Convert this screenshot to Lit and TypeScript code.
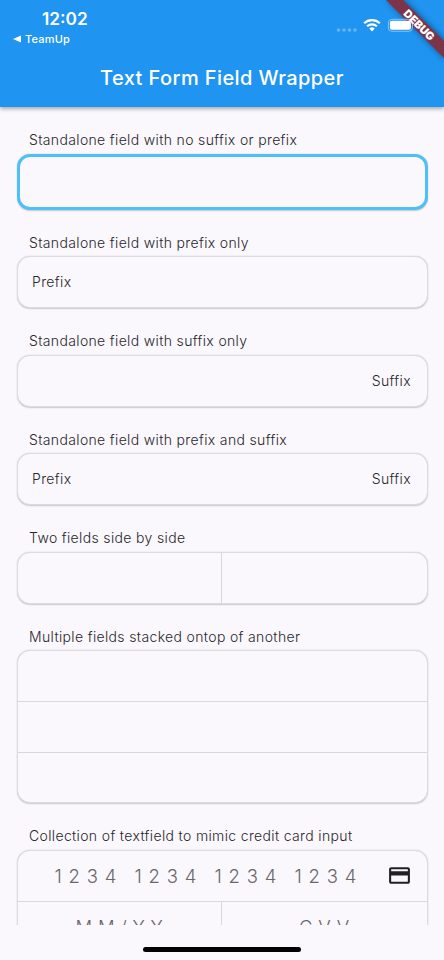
import { LitElement, html, css } from "lit";
import { customElement, property } from "lit/decorators.js";

@customElement("field-group")
class FieldGroup extends LitElement {
  @property() label = "";

  static styles = css`
    :host { display: block; margin-bottom: 23.9px; }
    .label { height: 23px; box-sizing: border-box; padding-top: 0.4px; line-height: 18px; padding-left: 12.5px; font-size: 14px; font-weight: 350; letter-spacing: 0.35px; color: #29272b; white-space: nowrap; }
    .box { border: 1px solid #dddbdf; border-radius: 13px; box-shadow: 0 0.5px 1.5px rgba(0, 0, 0, 0.2); background: #faf8fc; overflow: hidden; }
    :host([focused]) .box { border: 3px solid #4dc0f7; }
    ::slotted(.line) { border-top: 1px solid #d9d7db; }
  `;

  render() {
    return html`<div class="label">${this.label}</div><div class="box"><slot></slot></div>`;
  }
}

@customElement("app-root")
class AppRoot extends LitElement {
  static styles = css`
    :host { display: flex; flex-direction: column; position: relative; width: 444px; height: 960px; overflow: hidden; background: #faf8fc; font-family: Inter, "Liberation Sans", sans-serif; color: #29272b; }
    .header { flex: none; height: 107px; background: #2094f1; color: #fff; box-shadow: 0 2px 4px rgba(0, 0, 0, 0.32); position: relative; z-index: 1; }
    .time { height: 31px; box-sizing: border-box; padding: 8px 0 0 42px; font-size: 17.3px; line-height: 21px; font-weight: 600; }
    .back { display: flex; align-items: center; gap: 4px; height: 15px; padding-left: 13px; font-size: 11px; font-weight: 500; letter-spacing: 0.2px; }
    .title { margin-top: 18px; line-height: 28px; font-size: 20px; font-weight: 500; text-align: center; letter-spacing: 0.4px; white-space: nowrap; }
    .corner { position: absolute; top: 0; right: 0; display: block; }
    .content { flex: none; height: 818px; box-sizing: border-box; padding: 24px 16.5px 0; overflow: hidden; }
    .row { display: flex; align-items: center; height: 49.6px; }
    .affix { box-sizing: border-box; padding: 0 15.5px 1px 14.5px; justify-content: space-between; font-size: 14px; font-weight: 350; letter-spacing: 0.38px; }
    .half { flex: 1; height: 100%; display: flex; justify-content: center; align-items: center; }
    .half:first-child { flex: 0 0 203px; }
    .half + .half { border-left: 1px solid #d9d7db; }
    .hint { font-size: 18.5px; font-weight: 350; color: #69676b; white-space: pre; }
    .digits { display: flex; gap: 18px; padding-left: 37px; flex: 1; }
    .quad { display: flex; width: 62px; justify-content: space-between; }
    .card { margin-right: 15px; }
    .wide { letter-spacing: 5.7px; box-sizing: border-box; padding: 2px 0 0 6px; }
    .home { align-self: center; margin-top: 21.5px; width: 158px; height: 5px; border-radius: 3px; background: #000; }
  `;

  render() {
    return html`
      <div class="header">
        <div class="time">12:02</div>
        <div class="back"><svg width="8" height="8" viewBox="0 0 8 8"><path d="M8 .5v7L0 4Z" fill="#fff"/></svg><span>TeamUp</span></div>
        <div class="title">Text Form Field Wrapper</div>
        <svg class="corner" width="120" height="70" viewBox="324 0 120 70">
          <defs><filter id="shade" x="-20%" y="-20%" width="140%" height="140%"><feGaussianBlur stdDeviation="3"/></filter></defs>
          <path d="M386-1 403-1 445 41 445 59Z" fill="#000" opacity=".45" filter="url(#shade)"/>
          <path d="M385-1h17l43 43v17Z" fill="#7d3449"/>
          <g fill="#64b5f6"><circle cx="338.5" cy="30" r="1.8"/><circle cx="344" cy="30" r="1.8"/><circle cx="349.5" cy="30" r="1.8"/><circle cx="355" cy="30" r="1.8"/></g>
          <g fill="none" stroke="#fff" stroke-width="2.2"><path d="M364.2 23.2a11.2 11.2 0 0 1 15.6 0"/><path d="M367.1 26.3a7.1 7.1 0 0 1 9.8 0"/></g>
          <path d="m372 31.4-2.7-2.8a4 4 0 0 1 5.4 0Z" fill="#fff"/>
          <rect x="388.4" y="19.3" width="24" height="12" rx="3.4" fill="none" stroke="#8fc9f8" stroke-width=".9"/>
          <rect x="389.9" y="20.8" width="21" height="9" rx="2" fill="#fff"/>
          <text x="0" y="4" transform="translate(419.2 25) rotate(45)" text-anchor="middle" font-size="11" font-weight="900" fill="#fff">DEBUG</text>
        </svg>
      </div>
      <div class="content">
        <field-group label="Standalone field with no suffix or prefix" focused><div class="row"></div></field-group>
        <field-group label="Standalone field with prefix only"><div class="row affix"><span>Prefix</span></div></field-group>
        <field-group label="Standalone field with suffix only"><div class="row affix"><span></span><span>Suffix</span></div></field-group>
        <field-group label="Standalone field with prefix and suffix"><div class="row affix"><span>Prefix</span><span>Suffix</span></div></field-group>
        <field-group label="Two fields side by side"><div class="row"><div class="half"></div><div class="half"></div></div></field-group>
        <field-group label="Multiple fields stacked ontop of another"><div class="row"></div><div class="row line"></div><div class="row line"></div></field-group>
        <field-group label="Collection of textfield to mimic credit card input">
          <div class="row hint">
            <div class="digits">${[0, 1, 2, 3].map(() => html`<div class="quad">${["1", "2", "3", "4"].map((d) => html`<span>${d}</span>`)}</div>`)}</div>
            <svg class="card" width="25" height="25" viewBox="0 0 24 24"><path fill="#211f23" d="M20 4H4c-1.11 0-1.99.89-1.99 2L2 18c0 1.11.89 2 2 2h16c1.11 0 2-.89 2-2V6c0-1.11-.89-2-2-2zm0 14H4v-6h16v6zm0-10H4V6h16v2z"/></svg>
          </div>
          <div class="row line hint"><div class="half wide">MM/YY</div><div class="half wide">CVV</div></div>
        </field-group>
      </div>
      <div class="home"></div>
    `;
  }
}
